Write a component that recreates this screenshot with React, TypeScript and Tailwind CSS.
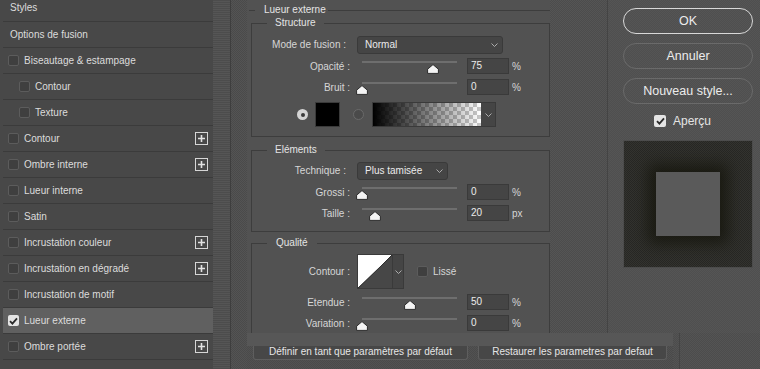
import React from "react";

type Item = {
  label: string;
  checkbox?: boolean;
  indent?: boolean;
  plus?: boolean;
  checked?: boolean;
  active?: boolean;
};

const items: Item[] = [
  { label: "Options de fusion" },
  { label: "Biseautage & estampage", checkbox: true },
  { label: "Contour", checkbox: true, indent: true },
  { label: "Texture", checkbox: true, indent: true },
  { label: "Contour", checkbox: true, plus: true },
  { label: "Ombre interne", checkbox: true, plus: true },
  { label: "Lueur interne", checkbox: true },
  { label: "Satin", checkbox: true },
  { label: "Incrustation couleur", checkbox: true, plus: true },
  { label: "Incrustation en dégradé", checkbox: true, plus: true },
  { label: "Incrustation de motif", checkbox: true },
  { label: "Lueur externe", checkbox: true, checked: true, active: true },
  { label: "Ombre portée", checkbox: true, plus: true },
];

function CheckMark() {
  return (
    <svg width="9" height="8" viewBox="0 0 9 8">
      <path d="M1 4.2 L3.4 6.6 L8 1.4" fill="none" stroke="#2a2a2a" strokeWidth="1.8" />
    </svg>
  );
}

function Check({ checked, size = 11 }: { checked?: boolean; size?: number }) {
  return checked ? (
    <div
      className="shrink-0 rounded-[2px] bg-[#e4e4e4] flex items-center justify-center"
      style={{ width: size, height: size }}
    >
      <CheckMark />
    </div>
  ) : (
    <div
      className="shrink-0 rounded-[2px] bg-[#3f3f3f] border border-[#5c5c5c]"
      style={{ width: size, height: size }}
    />
  );
}

function PlusBox() {
  return (
    <div className="w-[13px] h-[13px] border-[1.5px] border-[#d6d6d6] flex items-center justify-center">
      <svg width="7" height="7" viewBox="0 0 7 7">
        <path d="M3.5 0 V7 M0 3.5 H7" stroke="#e2e2e2" strokeWidth="1.6" />
      </svg>
    </div>
  );
}

function Chevron() {
  return (
    <svg width="7" height="4" viewBox="0 0 7 4">
      <path d="M0.5 0.5 L3.5 3.5 L6.5 0.5" fill="none" stroke="#b8b8b8" strokeWidth="0.9" />
    </svg>
  );
}

function Thumb({ pct }: { pct: number }) {
  return (
    <svg
      className="absolute top-[6px]"
      style={{ left: Math.round(pct * 95) - 6 }}
      width="12"
      height="10"
      viewBox="0 0 12 10"
    >
      <path d="M6 0.6 L11.4 5.2 V9.4 H0.6 V5.2 Z" fill="#f4f4f4" stroke="#1e1e1e" strokeWidth="0.9" strokeLinejoin="round" />
    </svg>
  );
}

function SliderRow({ label, value, pct, unit }: { label: string; value: string; pct: number; unit: string }) {
  return (
    <div className="flex items-start h-[21px]">
      <div className="w-[98px] text-right mt-[3px]">{label}</div>
      <div className="relative ml-[12px] w-[95px] h-[16px]">
        <div className="absolute left-0 right-0 top-[3px] h-[2px] bg-[#6e6e6e]" />
        <Thumb pct={pct} />
      </div>
      <div className="ml-[10px] w-[42px] h-[16px] bg-[#454545] border border-[#3a3a3a] pl-[3px] leading-[14px] text-[#ebebeb]">
        {value}
      </div>
      <div className="ml-[3px] mt-[3px]">{unit}</div>
    </div>
  );
}

function Dropdown({ label, value, width }: { label: string; value: string; width: number }) {
  return (
    <div className="flex items-center h-[18px]">
      <div className="w-[94px] text-right">{label}</div>
      <div
        className="ml-[11px] h-[18px] bg-[#454545] border border-[#3a3a3a] rounded-[3px] flex items-center justify-between pl-[7px] pr-[4px] text-[#ebebeb]"
        style={{ width }}
      >
        <span>{value}</span>
        <Chevron />
      </div>
    </div>
  );
}

function Sidebar() {
  return (
    <div className="w-[247px] h-full flex shrink-0">
      <div className="w-[213px] h-full pl-[3px] bg-[#484848] flex flex-col">
        <div className="h-[22px] shrink-0 border-b border-[#3b3b3b] pl-[7px] pt-[2px] text-[#dcdcdc]">Styles</div>
        {items.map((item, i) => (
          <div
            key={i}
            className={`h-[26px] shrink-0 border-b border-[#3b3b3b] flex items-center justify-between pr-[5px] ${
              item.active ? "bg-[#606060]" : ""
            } ${item.indent ? "pl-[16px]" : item.checkbox ? "pl-[5px]" : "pl-[7px]"}`}
          >
            <div className="flex items-center gap-[5px] text-[#dcdcdc]">
              {item.checkbox && <Check checked={item.checked} />}
              <span>{item.label}</span>
            </div>
            {item.plus && <PlusBox />}
          </div>
        ))}
      </div>
      <div className="w-[17px] h-full bg-[image:repeating-linear-gradient(#4c4c4c_0_1px,#555555_1px_2px)]" />
      <div className="w-[1px] h-full bg-[#3e3e3e]" />
      <div className="w-[16px] h-full bg-[image:repeating-conic-gradient(#4a4a4a_0_25%,#545454_0_50%)] bg-[length:2px_2px]" />
    </div>
  );
}

function Settings() {
  return (
    <div className="w-[303px] h-full bg-[#525252] pl-[2px] pt-[4px] overflow-hidden shrink-0">
      <fieldset className="border-t border-[#3d3d3d]">
        <legend className="ml-[6px] pl-[9px] pr-[2px] text-[#e4e4e4]">Lueur externe</legend>

        <fieldset className="ml-[2px] mt-[1px] border border-[#3d3d3d] pt-[7px] pb-[9px]">
          <legend className="ml-[15px] px-[8px] text-[#e4e4e4]">Structure</legend>
          <Dropdown label="Mode de fusion :" value="Normal" width={146} />
          <div className="mt-[4px]">
            <SliderRow label="Opacité :" value="75" pct={0.75} unit="%" />
            <SliderRow label="Bruit :" value="0" pct={0} unit="%" />
          </div>
          <div className="mt-[2px] flex items-center h-[25px]">
            <div className="ml-[45px] w-[11px] h-[11px] rounded-full bg-[#d4d4d4] flex items-center justify-center">
              <div className="w-[4px] h-[4px] rounded-full bg-[#3a3a3a]" />
            </div>
            <div className="ml-[7px] w-[25px] h-[25px] bg-black border border-[#3a3a3a]" />
            <div className="ml-[13px] w-[11px] h-[11px] rounded-full border border-[#6a6a6a] bg-[#4a4a4a]" />
            <div className="ml-[8px] flex h-[25px] border border-[#3a3a3a]">
              <div className="w-[108px] h-full bg-[image:linear-gradient(to_right,#000,rgba(0,0,0,0)),repeating-conic-gradient(#c8c8c8_0_25%,#ffffff_0_50%)] bg-[length:100%_100%,8px_8px]" />
              <div className="w-[14px] h-full bg-[#454545] flex items-center justify-center">
                <Chevron />
              </div>
            </div>
          </div>
        </fieldset>

        <fieldset className="ml-[2px] mt-[7px] border border-[#3d3d3d] pt-[6px] pb-[5px]">
          <legend className="ml-[15px] px-[8px] text-[#e4e4e4]">Eléments</legend>
          <Dropdown label="Technique :" value="Plus tamisée" width={91} />
          <div className="mt-[4px]">
            <SliderRow label="Grossi :" value="0" pct={0} unit="%" />
            <SliderRow label="Taille :" value="20" pct={0.14} unit="px" />
          </div>
        </fieldset>

        <fieldset className="ml-[2px] mt-[5px] border border-[#3d3d3d] pt-[5px] pb-[10px]">
          <legend className="ml-[15px] px-[9px] text-[#e4e4e4]">Qualité</legend>
          <div className="flex items-center h-[35px]">
            <div className="w-[98px] text-right">Contour :</div>
            <div className="ml-[7px] flex h-[35px] border border-[#3a3a3a]">
              <div className="w-[34px] h-full bg-[image:linear-gradient(to_bottom_right,#ffffff_49%,#2c2c2c_50%,#474747_52%)]" />
              <div className="w-[11px] h-full bg-[#454545] border-l border-[#3a3a3a] flex items-center justify-center">
                <Chevron />
              </div>
            </div>
            <div className="ml-[13px]">
              <Check />
            </div>
            <span className="ml-[5px]">Lissé</span>
          </div>
          <div className="mt-[5px]">
            <SliderRow label="Etendue :" value="50" pct={0.5} unit="%" />
            <SliderRow label="Variation :" value="0" pct={0} unit="%" />
          </div>
        </fieldset>
      </fieldset>
    </div>
  );
}

function PillButton({ label, primary }: { label: string; primary?: boolean }) {
  return (
    <div
      className={`w-[130px] h-[26px] rounded-full border flex items-center justify-center text-[12.5px] leading-[14px] text-[#ececec] ${
        primary ? "border-[#d8d8d8]" : "border-[#6a6a6a]"
      }`}
    >
      {label}
    </div>
  );
}

function RightCol() {
  return (
    <div className="w-[153px] h-full shrink-0 border-l border-[#444444] pl-[15px] pt-[8px] bg-[image:repeating-conic-gradient(#4f4f4f_0_25%,#555555_0_50%)] bg-[length:2px_2px]">
      <div className="flex flex-col gap-[9px]">
        <PillButton label="OK" primary />
        <PillButton label="Annuler" />
        <PillButton label="Nouveau style..." />
      </div>
      <div className="mt-[11px] ml-[31px] flex items-center h-[12px] gap-[7px] text-[12px] leading-[14px] text-[#e4e4e4]">
        <Check checked size={12} />
        <span>Aperçu</span>
      </div>
      <div className="mt-[13px] w-[130px] h-[128px] border border-[#4c4c4c] bg-[image:repeating-conic-gradient(#272724_0_25%,#33332f_0_50%)] bg-[length:2px_2px] flex items-center justify-center">
        <div className="w-[64px] h-[64px] bg-[#5a5a5a] shadow-[0_0_14px_8px_#1a1a12]" />
      </div>
    </div>
  );
}

function BottomBar() {
  return (
    <div className="flex h-[36px]">
      <div className="w-[426px] flex flex-col">
        <div className="h-[13px] bg-[#575757]" />
        <div className="h-[23px] flex items-start pl-[6px] bg-[image:repeating-conic-gradient(#4a4a4a_0_25%,#525252_0_50%)] bg-[length:2px_2px]">
          <div className="w-[215px] h-[14px] bg-[#474747] border border-t-0 border-[#5e5e5e] rounded-b-[3px] text-center leading-[12px] text-[#e6e6e6]">
            Définir en tant que paramètres par défaut
          </div>
          <div className="ml-[10px] w-[189px] h-[14px] bg-[#474747] border border-t-0 border-[#5e5e5e] rounded-b-[3px] text-center leading-[12px] text-[#e6e6e6]">
            Restaurer les parametres par defaut
          </div>
        </div>
      </div>
      <div className="flex-1 flex bg-[image:repeating-conic-gradient(#4c4c4c_0_25%,#545454_0_50%)] bg-[length:2px_2px]">
        <div className="w-[6px]" />
        <div className="w-px bg-[#444444]" />
      </div>
    </div>
  );
}

export default function App() {
  return (
    <div className="w-[760px] h-[369px] flex overflow-hidden bg-[#525252] text-[#d6d6d6] text-[10px] leading-[12px] font-['Liberation_Sans',Arial,sans-serif]">
      <Sidebar />
      <div className="flex flex-col w-[513px]">
        <div className="flex h-[333px]">
          <Settings />
          <div className="w-[57px] h-full shrink-0 bg-[image:repeating-conic-gradient(#4c4c4c_0_25%,#555555_0_50%)] bg-[length:2px_2px]" />
          <RightCol />
        </div>
        <BottomBar />
      </div>
    </div>
  );
}
